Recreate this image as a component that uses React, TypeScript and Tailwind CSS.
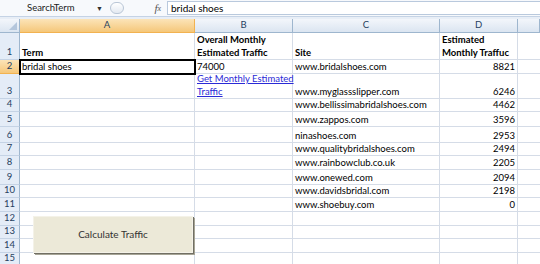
import React from "react";

const rowHeights = [27, 14, 25, 13, 15, 16, 13, 14, 15, 13, 14, 14, 13, 14, 13];

type Cell = { text?: string; bold?: boolean; right?: boolean; link?: boolean };

const data: Record<number, Cell[]> = {
  1: [{ text: "Term", bold: true }, { text: "Overall Monthly Estimated Traffic", bold: true }, { text: "Site", bold: true }, { text: "Estimated Monthly Traffuc", bold: true }],
  2: [{ text: "bridal shoes" }, { text: "74000" }, { text: "www.bridalshoes.com" }, { text: "8821", right: true }],
  3: [{}, { text: "Get Monthly Estimated Traffic", link: true }, { text: "www.myglassslipper.com" }, { text: "6246", right: true }],
  4: [{}, {}, { text: "www.bellissimabridalshoes.com" }, { text: "4462", right: true }],
  5: [{}, {}, { text: "www.zappos.com" }, { text: "3596", right: true }],
  6: [{}, {}, { text: "ninashoes.com" }, { text: "2953", right: true }],
  7: [{}, {}, { text: "www.qualitybridalshoes.com" }, { text: "2494", right: true }],
  8: [{}, {}, { text: "www.rainbowclub.co.uk" }, { text: "2205", right: true }],
  9: [{}, {}, { text: "www.onewed.com" }, { text: "2094", right: true }],
  10: [{}, {}, { text: "www.davidsbridal.com" }, { text: "2198", right: true }],
  11: [{}, {}, { text: "www.shoebuy.com" }, { text: "0", right: true }],
};

export default function App() {
  return (
    <div
      className="w-[540px] h-[264px] overflow-hidden bg-white text-[9.5px] text-black"
      style={{ fontFamily: "Lato, 'Liberation Sans', sans-serif" }}
    >
      {/* Formula bar */}
      <div className="h-[17px] flex items-center bg-[#f7f9fc] border-b border-[#c5d3e5]">
        <div className="w-[96px] pl-[27px] text-[#222]">SearchTerm</div>
        <div className="w-[12px] text-[7px] text-[#333] leading-none">▼</div>
        <div className="w-[14px] h-[12px] rounded-full border border-[#b9c6d6] bg-gradient-to-b from-white to-[#e3e9f1] ml-[2px]" />
        <div className="w-[43px] flex justify-end pr-[6px] text-[#555] italic" style={{ fontFamily: "'Liberation Serif', serif" }}>
          <span className="text-[11px]">f</span>
          <span className="text-[8px] mt-[3px]">x</span>
        </div>
        <div className="flex-1 h-[14px] bg-white border border-[#b9c9dd] border-r-0 pl-[3px] leading-[12px] text-[10px]">bridal shoes</div>
      </div>
      <div className="h-[2px] bg-[#e8eef6]" />

      {/* Grid */}
      <div className="relative">
        <div
          className="grid"
          style={{ gridTemplateColumns: "20px 175px 98px 147px 78px 22px", gridTemplateRows: `14px ${rowHeights.map((h) => h + "px").join(" ")}` }}
        >
          {/* header row */}
          <div className="bg-gradient-to-b from-[#f3f6fb] to-[#dbe5f1] border-r border-b border-[#9eb6ce] relative">
            <div className="absolute right-[2px] bottom-[2px] w-0 h-0 border-l-[8px] border-l-transparent border-b-[8px] border-b-[#b4c6dc]" />
          </div>
          {["A", "B", "C", "D", ""].map((l, i) => (
            <div
              key={l + i}
              className={
                "flex items-center justify-center text-[9.5px] text-[#27415f] border-r border-b " +
                (i === 0
                  ? "bg-gradient-to-b from-[#fbe4b8] to-[#f5c779] border-[#f2b250]"
                  : "bg-gradient-to-b from-[#f3f6fb] to-[#dbe5f1] border-[#9eb6ce]")
              }
            >
              {l}
            </div>
          ))}

          {rowHeights.map((h, ri) => {
            const r = ri + 1;
            const cells = data[r] || [{}, {}, {}, {}];
            return (
              <React.Fragment key={r}>
                <div
                  className={
                    "flex items-end justify-center pb-[1px] text-[9.5px] leading-[12px] text-[#27415f] border-r border-b " +
                    (r === 2
                      ? "bg-gradient-to-b from-[#fbe4b8] to-[#f5c779] border-r-[#f2b250] border-b-[#f2b250]"
                      : "bg-[#e4ecf7] border-r-[#9eb6ce] border-b-[#c5d3e5]")
                  }
                >
                  {r}
                </div>
                {cells.map((c, ci) => (
                  <div
                    key={ci}
                    className={
                      "flex flex-col justify-end px-[2px] leading-[12.5px] border-r border-b border-[#d5dce7] " +
                      (c.right ? "items-end " : "items-start ") +
                      (c.bold ? "font-bold " : "") +
                      (r === 2 && ci === 0 ? "relative z-10 outline-2 outline-black -outline-offset-1 " : "")
                    }
                  >
                    {c.link ? (
                      <span className="text-[#2a2ad6] underline whitespace-nowrap">
                        Get Monthly Estimated
                        <br />
                        Traffic
                      </span>
                    ) : c.text && r === 1 && ci === 1 ? (
                      <span className="whitespace-nowrap">
                        Overall Monthly
                        <br />
                        Estimated Traffic
                      </span>
                    ) : c.text && r === 1 && ci === 3 ? (
                      <span className="whitespace-nowrap">
                        Estimated
                        <br />
                        Monthly Traffuc
                      </span>
                    ) : (
                      <span className="whitespace-nowrap">{c.text}</span>
                    )}
                  </div>
                ))}
                <div className="border-b border-[#d5dce7]" />
              </React.Fragment>
            );
          })}
        </div>

        {/* Button */}
        <div className="absolute left-[33px] top-[197px] w-[160px] h-[37px] bg-[#ece9d8] border border-[#f4f2e8] shadow-[1px_1px_0_#716f64,2px_2px_0_#a7a596] flex items-center justify-center text-[10px] text-[#333]">
          Calculate Traffic
        </div>
      </div>
    </div>
  );
}
